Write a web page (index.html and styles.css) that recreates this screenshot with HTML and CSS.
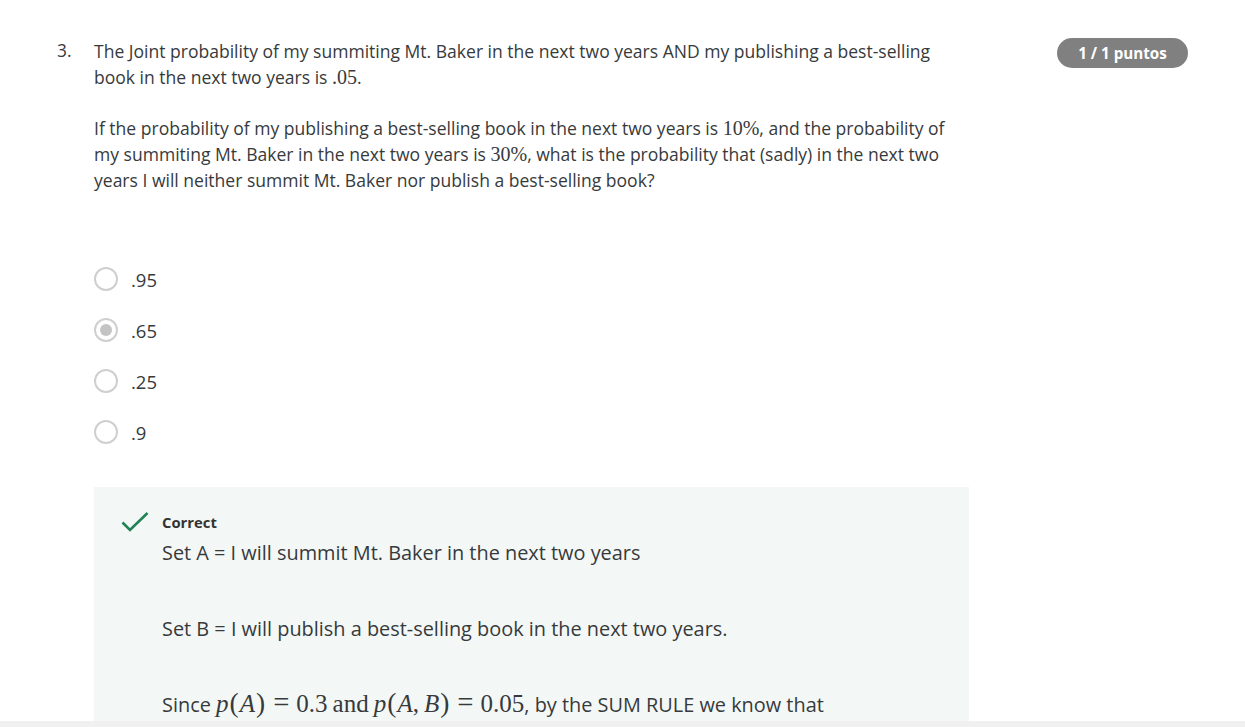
FILE: index.html
```html
<!DOCTYPE html>
<html lang="es">
<head>
<meta charset="utf-8">
<link rel="stylesheet" href="styles.css">
</head>
<body>
<div class="page">
  <div class="question">
    <div class="qnum">3.</div>
    <div class="qbody">
      <div class="prompt">
        <p>The Joint probability of my summiting Mt. Baker in the next two years AND my publishing a best-selling book in the next two years is <span class="m">.05</span>.</p>
        <p>If the probability of my publishing a best-selling book in the next two years is <span class="m">10%</span>, and the probability of my summiting Mt. Baker in the next two years is <span class="m">30%</span>, what is the probability that (sadly) in the next two years I will neither summit Mt. Baker nor publish a best-selling book?</p>
      </div>
      <div class="options">
        <label class="opt"><span class="radio"></span><span class="olabel">.95</span></label>
        <label class="opt"><span class="radio checked"></span><span class="olabel">.65</span></label>
        <label class="opt"><span class="radio"></span><span class="olabel">.25</span></label>
        <label class="opt"><span class="radio"></span><span class="olabel">.9</span></label>
      </div>
      <div class="feedback">
        <div class="fhead">
          <svg class="check" width="28" height="20" viewBox="0 0 28 20"><path d="M1.5 10.5 L9 18 L26.5 1" fill="none" stroke="#1f8354" stroke-width="2.6"/></svg>
          <span class="ftitle">Correct</span>
        </div>
        <div class="fbody">
          <p>Set A = I will summit Mt. Baker in the next two years</p>
          <p>Set B = I will publish a best-selling book in the next two years.</p>
          <p>Since <span class="m"><i>p</i><span class="par">(</span><i>A</i><span class="par">)</span><span class="rel">=</span>0.3<span class="txt">and</span><i>p</i><span class="par">(</span><i>A</i>,<span class="sp"></span><i>B</i><span class="par">)</span><span class="rel">=</span>0.05</span>, by the SUM RULE we know that</p>
        </div>
      </div>
    </div>
    <div class="badge">1 / 1 puntos</div>
  </div>
</div>
<div class="hscroll"></div>
</body>
</html>
```

FILE: styles.css
```css
html, body {
  margin: 0;
  padding: 0;
  background: #fff;
  height: 100%;
  overflow: hidden;
}
body {
  font-family: "Open Sans", "Liberation Sans", sans-serif;
  color: #373a3c;
  position: relative;
}
.page {
  padding: 38px 57px 0 57px;
}
.question {
  display: flex;
  align-items: flex-start;
}
.qnum {
  width: 37px;
  font-size: 17.3px;
  line-height: 26px;
  flex: none;
}
.qbody {
  width: 875px;
  flex: none;
}
.prompt {
  width: 862px;
  font-size: 17.55px;
  line-height: 26px;
}
.prompt p {
  margin: 0 0 25px 0;
}
.m {
  font-family: "Liberation Serif", "DejaVu Serif", serif;
  font-size: 20px;
  line-height: 1;
}
.options {
  margin-top: 74px;
  display: flex;
  flex-direction: column;
  gap: 27px;
}
.opt {
  display: flex;
  align-items: center;
  height: 24px;
  font-size: 18.5px;
}
.radio {
  width: 20px;
  height: 20px;
  border: 2px solid #cfcfcf;
  border-radius: 50%;
  box-sizing: content-box;
  display: flex;
  align-items: center;
  justify-content: center;
  margin-right: 13px;
}
.radio.checked::after {
  content: "";
  width: 12px;
  height: 12px;
  border-radius: 50%;
  background: #c4c4c4;
}
.feedback {
  margin-top: 43px;
  background: #f3f8f6;
  padding: 25px 27px 30px 27px;
  min-height: 260px;
}
.fhead {
  display: flex;
  align-items: center;
}
.check {
  margin-right: 13px;
}
.ftitle {
  font-size: 14.8px;
  font-weight: 700;
  color: #333;
}
.fbody {
  padding-left: 41px;
  font-size: 19.9px;
  line-height: 26px;
  margin-top: 8px;
}
.fbody p {
  margin: 0 0 50px 0;
}
.fbody .m {
  font-size: 25px;
  line-height: 14px;
}
.par {
  font-size: 1.1em;
  margin: 0 1px;
}
.rel {
  font-size: 1.15em;
  margin: 0 7px;
}
.txt {
  margin: 0 5px 0 5px;
}
.sp {
  display: inline-block;
  width: 5px;
}
.badge {
  margin-left: auto;
  background: #808080;
  color: #fff;
  font-weight: 700;
  font-size: 15.2px;
  width: 131px;
  height: 30px;
  border-radius: 15px;
  display: flex;
  align-items: center;
  justify-content: center;
}
.hscroll {
  position: absolute;
  left: 0;
  right: 0;
  bottom: 0;
  height: 6px;
  background: #f0f0f0;
}
```
